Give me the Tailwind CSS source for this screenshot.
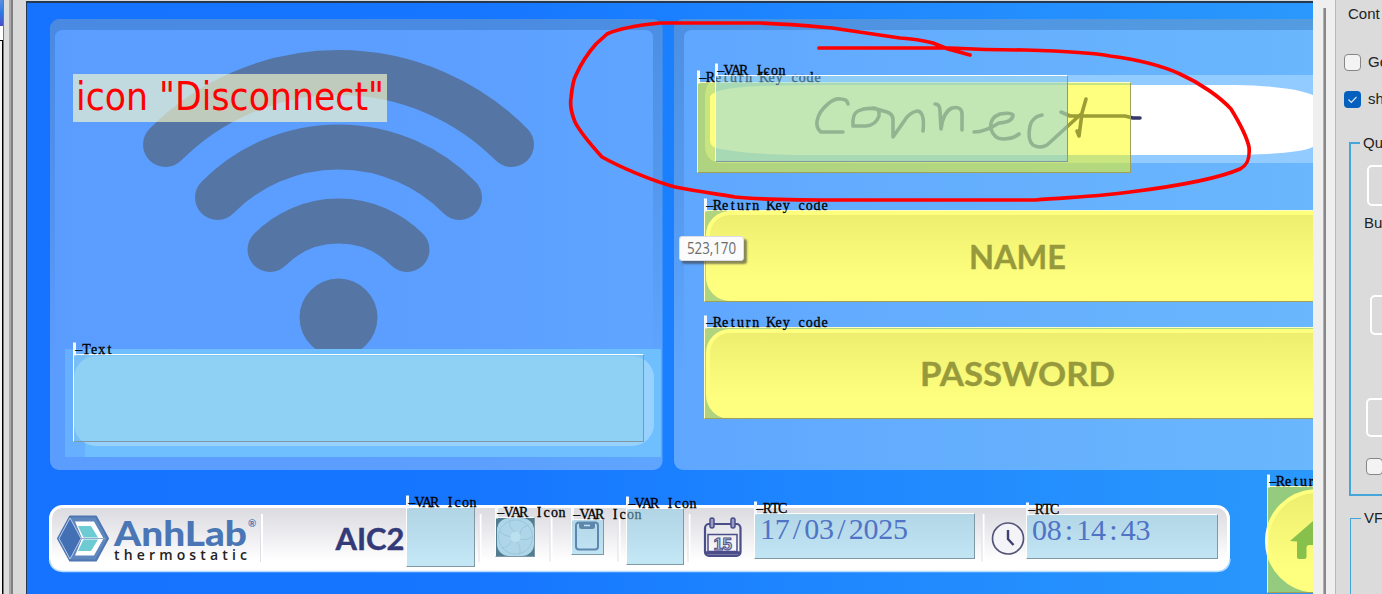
<!DOCTYPE html>
<html lang="en">
<head>
<meta charset="utf-8">
<title>Screen designer</title>
<script src="https://cdn.jsdelivr.net/npm/@tailwindcss/browser@4"></script>
</head>
<body class="w-[1382px] h-[594px] overflow-hidden bg-[#d9d9d9] flex font-['Liberation_Sans',sans-serif] text-[15px] text-[#222]">

<!-- left dock edge -->
<aside class="w-[26px] h-full flex shrink-0">
  <div class="w-[3px] h-full flex flex-col bg-white">
    <div class="h-[26px] bg-linear-to-b from-[#5b8ee0] via-[#2a78e4] to-[#4a4cc4]"></div>
    <div class="h-[14px] bg-white"></div>
    <div class="grow border-t border-r border-black bg-[#f4f4f4]"></div>
  </div>
  <div class="w-px bg-[#777]"></div>
  <div class="w-[5px] bg-[#dcdcdc]"></div>
  <div class="w-[2px] bg-[#a8a8a8]"></div>
  <div class="w-[2px] bg-[#808080]"></div>
  <div class="grow bg-[#d9d9d9]"></div>
</aside>

<!-- design canvas -->
<main class="relative w-[1287px] h-[593px] mt-px shrink-0 overflow-hidden border-l border-t-2 border-[#24384f] font-['Liberation_Serif',serif]">
  <svg class="absolute left-0 top-0" width="1286" height="591" viewBox="27 3 1286 591">
    <defs>
      <linearGradient id="bg"><stop offset="0" stop-color="#1573ff"/><stop offset=".35" stop-color="#1676ff"/><stop offset=".6" stop-color="#1e86ff"/><stop offset="1" stop-color="#2a98fc"/></linearGradient>
      <linearGradient id="band" x2="0" y2="1"><stop offset="0" stop-color="#1f5a9c" stop-opacity=".3"/><stop offset=".4" stop-color="#1f5a9c" stop-opacity=".16"/><stop offset=".8" stop-color="#1f5a9c" stop-opacity="0"/></linearGradient>
      <linearGradient id="bar" x2="0" y2="1"><stop offset="0" stop-color="#dadadf"/><stop offset=".5" stop-color="#efeff2"/><stop offset=".85" stop-color="#fff"/></linearGradient>
      <linearGradient id="btn" x2="0" y2="1"><stop offset="0" stop-color="#dadade"/><stop offset=".8" stop-color="#fff"/></linearGradient>
      <clipPath id="wifiClip"><rect x="50" y="30" width="612" height="319"/></clipPath>
    </defs>
    <rect x="27" y="3" width="1286" height="591" fill="url(#bg)"/>
    <!-- panels -->
    <rect x="50" y="19" width="612.500" height="451" rx="9" fill="#fff" fill-opacity=".3"/>
    <path d="M59 19H654Q662.500 19 662.500 28V461H653V38Q653 30 645 30H63Q55 30 55 38V461H50V28Q50 19 59 19Z" fill="url(#band)"/>
    <rect x="674" y="19" width="700" height="451" rx="9" fill="#fff" fill-opacity=".3"/>
    <path d="M683 19H1320V30H692Q684 30 684 38V461H674V28Q674 19 683 19Z" fill="url(#band)"/>
    <!-- wifi symbol -->
    <g clip-path="url(#wifiClip)" fill="none" stroke="#5576a5" stroke-width="45" stroke-linecap="round">
      <path d="M165.500 144.500A244 244 0 0 1 511.500 144.500"/>
      <path d="M217.500 197.500A170 170 0 0 1 459.500 197.500"/>
      <path d="M270 249.500A96.600 96.600 0 0 1 407 249.500"/>
      <circle cx="338.500" cy="317.500" r="39" fill="#5576a5" stroke="none"/>
    </g>
    <!-- text field artwork -->
    <rect x="65" y="349" width="596" height="108" fill="#66b0ff"/>
    <rect x="85" y="349" width="576" height="108" fill="#6fbfff"/>
    <rect x="74" y="356" width="580" height="90" rx="22" fill="#97d2ff"/>
    <!-- connect button artwork -->
    <path d="M1313 75H725Q705 77 705 97V145Q705 160 718 163H1313Z" fill="#92cbff"/>
    <path d="M710 97Q712 88 760 86C800 84.500 830 85 900 85H1235C1270 85.500 1300 89 1313 95V147C1300 153 1265 155 1220 155H820C760 155 735 152 716 148Q710 146 710 140Z" fill="#fff"/>
    <g fill="none" stroke="#363a6a" stroke-width="3.600" stroke-linecap="round" stroke-linejoin="round">
      <path d="M848 104Q847 99 841 99Q834 98 828 104Q819 111 817 121Q816 128 821 132H843"/>
      <path d="M877 109Q866 107 858 111Q852 114 853 126H866Q876 125 879 116Q880 108 873 108L887 112Q893 114 893 120V137L907 117Q913 111 918 111Q925 113 923 131"/>
      <path d="M935 104Q940 104 940 111L941 129Q943 112 952 108Q961 106 962 113V130"/>
      <path d="M974 132Q985 132 999 123Q1013 122 1013 115Q1011 112 1000 114Q989 118 991 129Q994 139 1003 139Q1013 139 1019 134"/>
      <path d="M1042 115Q1032 117 1030 126Q1027 140 1033 145Q1040 149 1047 145L1080 115M1086 99L1082 113L1079 136L1077 131M1061 112L1070 116H1125L1133 118H1140"/>
    </g>
    <!-- name / password buttons -->
    <g fill="url(#btn)" stroke="#fff" stroke-width="4">
      <rect x="708" y="213" width="700" height="86" rx="22"/>
      <rect x="708" y="331" width="700" height="86" rx="22"/>
    </g>
    <g font-family="Lato, sans-serif" font-weight="700" font-size="32.500" fill="#2f3579" stroke="#2f3579" stroke-width=".4">
      <text x="969" y="269" textLength="97" lengthAdjust="spacingAndGlyphs">NAME</text>
      <text x="920" y="386" textLength="195" lengthAdjust="spacingAndGlyphs">PASSWORD</text>
    </g>
    <!-- status bar -->
    <rect x="50.500" y="506.500" width="1178" height="63.500" rx="12" fill="url(#bar)" stroke="#fff" stroke-width="3"/>
    <path d="M49.500 560Q51 571 63 571.500H1217Q1229 571 1230 559" fill="none" stroke="#b6dcff" stroke-width="1.500"/>
    <g stroke="#fff" stroke-width="2"><path d="M262 514V562M480.500 514V562M551.500 514V562M619.500 514V562M689.500 514V562M983.500 514V562"/></g>
    <g stroke="#dfe0e6" stroke-width="1"><path d="M260.500 514V562M479 514V562M550 514V562M618 514V562M688 514V562M982 514V562"/></g>
    <!-- brand mark -->
    <path d="M70 516.500H96L108 538.500L96 560.500H70L58 538.500Z" fill="#5f86bd" stroke="#4e76b2" stroke-width="2" stroke-linejoin="round"/>
    <path d="M70 518L81 538.500L70 559L59 538.500Z" fill="#436fb5" stroke="#b9cdec" stroke-width="1"/>
    <path d="M75 521.500H94L103.500 538.500L94 555.500H75L82 538.500Z" fill="#fff"/>
    <path d="M78 526H91L98 537.500H83.500ZM83.500 539.500H98L91 551H78Z" fill="#6ccbd3"/>
    <path d="M82 538.500H105" stroke="#8fa9d0" stroke-width="1"/>
    <text x="114" y="546" textLength="133" lengthAdjust="spacingAndGlyphs" font-family="Lato, sans-serif" font-weight="900" font-size="34.500" fill="#4a76b6">AnhLab</text>
    <text x="248" y="527" font-family="Lato, sans-serif" font-weight="700" font-size="10" fill="#4a76b6">®</text>
    <text x="114" y="559.500" textLength="133" font-family="'Open Sans', sans-serif" font-weight="600" font-size="14" fill="#222">thermostatic</text>
    <text x="335.500" y="550" textLength="69" lengthAdjust="spacingAndGlyphs" font-family="Lato, sans-serif" font-weight="700" font-size="30" fill="#343a78" stroke="#343a78" stroke-width=".4">AIC2</text>
    <!-- fan -->
    <rect x="496" y="517" width="39" height="40" fill="#1d2b33"/>
    <rect x="497" y="518" width="37" height="38" rx="12" fill="#d4dfe4"/>
    <g fill="none" stroke="#aebfc8" stroke-width="1"><circle cx="515.500" cy="537" r="17"/><path d="M515 532Q508 527 510 520M520 535Q520 527 529 525M520 539Q527 541 533 536M517 542Q522 548 519 555M512 541Q507 548 502 548M511 537Q504 536 499 531"/></g>
    <circle cx="515.500" cy="537" r="5" fill="#eef4f6"/>
    <!-- clipboard -->
    <g fill="none" stroke="#34406f" stroke-width="2"><rect x="576" y="522.500" width="22" height="27" rx="3"/><path d="M580 523V526.500Q580 528 582 528H592Q594 528 594 526.500V523" fill="#34406f"/></g>
    <path d="M584 525.500H590" stroke="#fff" stroke-width="1.500"/>
    <!-- calendar -->
    <g fill="none" stroke="#4a4d88" stroke-width="2.200">
      <rect x="705" y="524" width="35.500" height="32" rx="4"/><path d="M708 534.500H737V551.500H708Z" stroke-width="1.500"/>
      <path d="M705 553H740" stroke-width="3.500"/>
      <rect x="710" y="518" width="4" height="10" rx="2" fill="#9a9cc4" stroke-width="1.500"/><rect x="731" y="518" width="4" height="10" rx="2" fill="#9a9cc4" stroke-width="1.500"/>
    </g>
    <text x="722.500" y="549.500" text-anchor="middle" font-family="'Liberation Sans', sans-serif" font-weight="700" font-size="17" letter-spacing="-.5" fill="#c9cadf" stroke="#4a4d88" stroke-width="1">15</text>
    <!-- clock -->
    <circle cx="1008" cy="538.500" r="15.500" fill="#f3f3f8" stroke="#55557c" stroke-width="1.700"/>
    <path d="M1008 530V539L1013.500 545" fill="none" stroke="#3f4070" stroke-width="2.400"/>
    <!-- home button -->
    <circle cx="1317" cy="541" r="50" fill="url(#btn)" stroke="#fff" stroke-width="4"/>
    <path d="M1290 541L1313 521V545H1309Q1306.500 545 1306.500 548V557Q1306.500 559 1304 559H1299Q1297 559 1297 557V541.500Z" fill="#0f8296"/>
  </svg>

  <!-- placed controls -->
  <div class="absolute -left-px -top-px w-[1287px] h-[592px]">
    <div class="absolute left-[47px] top-[352px] w-[571px] h-[88px] bg-[rgb(135,206,235)]/50 border border-t-white border-l-white border-r-[#7f98a5] border-b-[#7f98a5]" data-label="–Text"></div>
    <div class="absolute left-[671px] top-[80px] w-[434px] h-[91px] bg-[#ffff00]/50 border border-t-[#ffffc0] border-l-[#ffffc0] border-r-[#a0a058] border-b-[#a0a058]" data-label="–Return Key code"></div>
    <div class="absolute left-[689px] top-[73px] w-[353px] h-[87px] bg-[rgb(135,206,235)]/50 border border-t-white border-l-white border-r-[#7f98a5] border-b-[#7f98a5]" data-label="–VAR Icon"></div>
    <div class="absolute left-[678px] top-[208px] w-[620px] h-[92px] bg-[#ffff00]/50 border border-t-[#ffffc0] border-l-[#ffffc0] border-r-[#a0a058] border-b-[#a0a058]" data-label="–Return Key code"></div>
    <div class="absolute left-[678px] top-[325px] w-[620px] h-[92px] bg-[#ffff00]/50 border border-t-[#ffffc0] border-l-[#ffffc0] border-r-[#a0a058] border-b-[#a0a058]" data-label="–Return Key code"></div>
    <div class="absolute left-[380px] top-[505px] w-[69px] h-[60px] bg-[rgb(135,206,235)]/50 border border-t-white border-l-white border-r-[#7f98a5] border-b-[#7f98a5]" data-label="–VAR Icon"></div>
    <div class="absolute left-[469px] top-[515px] w-[40px] h-[40px] bg-[rgb(135,206,235)]/50 border border-t-white border-l-white border-r-[#7f98a5] border-b-[#7f98a5]" data-label="–VAR Icon"></div>
    <div class="absolute left-[545px] top-[517px] w-[33px] h-[36px] bg-[rgb(135,206,235)]/50 border border-t-white border-l-white border-r-[#7f98a5] border-b-[#7f98a5]" data-label="–VAR Icon"></div>
    <div class="absolute left-[600px] top-[506px] w-[58px] h-[57px] bg-[rgb(135,206,235)]/50 border border-t-white border-l-white border-r-[#7f98a5] border-b-[#7f98a5]" data-label="–VAR Icon"></div>
    <div class="absolute left-[728px] top-[511px] w-[221px] h-[46px] bg-[rgb(135,206,235)]/50 border border-t-white border-l-white border-r-[#7f98a5] border-b-[#7f98a5]" data-label="–RTC" data-value="17/03/2025"></div>
    <div class="absolute left-[1000px] top-[512px] w-[192px] h-[45px] bg-[rgb(135,206,235)]/50 border border-t-white border-l-white border-r-[#7f98a5] border-b-[#7f98a5]" data-label="–RTC" data-value="08:14:43"></div>
    <div class="absolute left-[1241px] top-[484px] w-[60px] h-[107px] bg-[#ffff00]/50 border border-t-[#ffffc0] border-l-[#ffffc0] border-r-[#a0a058] border-b-[#a0a058]" data-label="–Retur"></div>
  </div>

  <!-- annotation tag -->
  <div class="absolute left-[46px] top-[71px] w-[314px] h-[48px] bg-[#ffffcb]/62">
    <svg width="314" height="48"><text x="3" y="36" textLength="308" lengthAdjust="spacingAndGlyphs" font-family="'DejaVu Sans Condensed', 'DejaVu Sans', sans-serif" font-size="39.500" fill="#f00">icon "Disconnect"</text></svg>
  </div>

  <!-- pointer tooltip -->
  <div class="absolute left-[652px] top-[233px] w-[65px] h-[25px] rounded-[3px] bg-[#fbfbfb] border border-[#dcdce4] shadow-[3px_3px_2px_rgba(60,60,60,0.6)]">
    <svg width="63" height="23"><text x="7" y="16.500" textLength="49" lengthAdjust="spacingAndGlyphs" font-family="'Open Sans', sans-serif" font-size="15.500" fill="#6b6b6b">523,170</text></svg>
  </div>

  <!-- freehand marker -->
  <svg class="absolute left-0 top-0" width="1286" height="591" viewBox="27 3 1286 591">
    <path d="M819 48H950C990 50 1010 50 1025 50C1060 51 1090 52 1110 56C1140 60 1165 67 1180 74C1200 83 1220 97 1231 109C1239 122 1247 138 1249 147C1250 158 1248 165 1240 169C1215 180 1170 187 1130 192C1095 197 1070 197 1035 200H850C800 200 760 200 735 197C710 193 695 191 675 187C650 180 620 167 602 157C592 146 580 132 575 122C571 112 570 104 571 98C572 88 573 80 576 75C580 66 588 53 596 44L607 34C620 28 640 25 660 23H760C790 24 810 26 832 28C865 33 885 36 900 38C915 39 925 41 933 43L948 49L970 55" fill="none" stroke="#f00" stroke-width="3.700" stroke-linecap="round" stroke-linejoin="round"/>
  </svg>
</main>

<!-- splitter -->
<div class="w-[23px] h-full shrink-0 flex bg-[#efefef] justify-between">
  <div class="w-[3px] h-full ml-[10px] mt-2 border-l border-[#b0b0b0] bg-[#888]"></div>
  <div class="w-px bg-[#b8b8b8]"></div>
</div>

<!-- property panel -->
<aside class="w-[46px] h-full overflow-hidden bg-[#dbdbdb] flex flex-col whitespace-nowrap leading-[18px]">
  <div class="mt-[5px] ml-[12px]">Cont</div>
  <div class="mt-[30px] ml-[8px] flex items-center gap-[7px]"><span class="size-[17px] shrink-0 rounded-[4px] border-[1.5px] border-[#868686] bg-[#f3f3f3]"></span><span>Ge</span></div>
  <div class="mt-[19px] ml-[8px] flex items-center gap-[7px]"><span class="size-[17px] shrink-0 rounded-[4px] bg-[#0560bd]"><svg width="17" height="17" viewBox="0 0 17 17"><path d="M4.500 8.500L7.300 11.300L12.500 6" fill="none" stroke="#d5e6f7" stroke-width="1.200"/></svg></span><span>sh</span></div>
  <fieldset class="mt-[26px] ml-[13px] h-[362px] w-[60px] shrink-0 border-2 border-[#45a5d9] flex flex-col">
    <legend class="ml-[9px] px-[3px]">Qu</legend>
    <div class="mt-[13px] ml-[16px] h-[41px] w-[60px] shrink-0 rounded-[5px] border-2 border-white bg-[#dadada]"></div>
    <div class="mt-[8px] ml-[13px]">Bu</div>
    <div class="mt-[63px] ml-[19px] h-[40px] w-[60px] shrink-0 rounded-[5px] border-2 border-white bg-[#dadada]"></div>
    <div class="mt-[63px] ml-[15px] h-[39px] w-[60px] shrink-0 rounded-[5px] border-2 border-white bg-[#dadada]"></div>
    <span class="mt-[21px] ml-[15px] size-[17px] shrink-0 rounded-[4px] border-[1.5px] border-[#868686] bg-[#f3f3f3]"></span>
  </fieldset>
  <fieldset class="mt-[13px] ml-[14px] h-[100px] w-[60px] shrink-0 border border-[#45a5d9]">
    <legend class="ml-[10px] px-[3px]">VF</legend>
  </fieldset>
</aside>

<script>
// Fixed-pitch serif lettering: every glyph is centred in a cell of equal width.
const pen = document.createElement('canvas').getContext('2d');
function cells(text, x, y, pitch, size, fill, edge) {
  pen.font = size + 'px "Liberation Serif"';
  const xs = [...text].map((c, i) => (x + i * pitch + (pitch - pen.measureText(c).width) / 2).toFixed(2));
  return '<text x="' + xs.join(' ') + '" y="' + y + '" font-size="' + size + '" fill="' + fill + '" stroke="' + fill + '" stroke-width="' + edge + '">' + text + '</text>';
}
document.querySelectorAll('[data-label]').forEach(el => {
  let s = '<rect x="-1" y="-12.500" width="3" height="13" fill="#f4f9ff"/>'
    + cells(el.dataset.label, 1, -1, 7.65, 14, '#000', 0.3);
  if (el.dataset.value) s += cells(el.dataset.value, 5, 24.5, 14.8, 30, '#4f74c6', 0);
  el.innerHTML = '<svg class="absolute left-0 top-0 overflow-visible" width="1" height="1">' + s + '</svg>';
});
</script>
</body>
</html>
